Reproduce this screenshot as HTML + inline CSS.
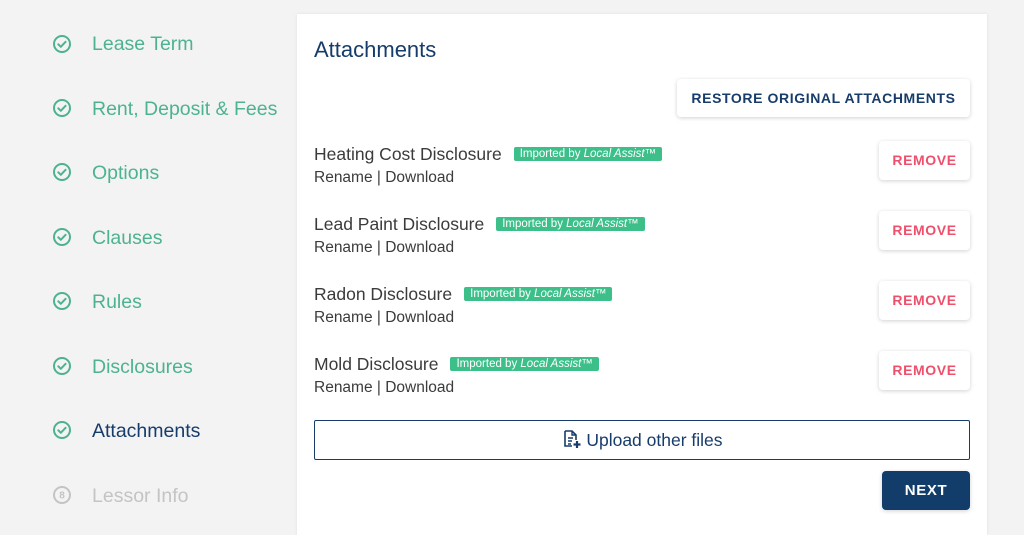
<!DOCTYPE html>
<html><head><style>
html,body{margin:0;width:1024px;height:535px;overflow:hidden}
body{background:#f3f3f3;font-family:"Liberation Sans",sans-serif;position:relative}
.nav{position:absolute;left:92px;font-size:19.5px;color:#4db38f}
.ic{position:absolute;left:52px;width:20px;height:20px}
.card{position:absolute;left:297px;top:14px;width:690px;height:521px;background:#fff;box-shadow:0 0 3px rgba(0,0,0,.08)}
.abs{position:absolute}
.btn{position:absolute;background:#fff;border-radius:4px;box-shadow:0 1px 4px rgba(0,0,0,.18);font-weight:bold;font-size:14px;letter-spacing:.6px;text-align:center}
.name{position:absolute;left:17px;font-size:17.5px;color:#3b3b3b}
.links{position:absolute;left:17px;font-size:15.5px;color:#3b3b3b}
.tag{display:inline-block;background:#3dbf8a;color:#fff;font-size:11.5px;padding:1px 6px;border-radius:2px;margin-left:12px;vertical-align:3px}
</style></head><body>
<svg width="0" height="0" style="position:absolute"><defs>
<g id="ck"><circle cx="10" cy="10" r="8" fill="none" stroke="#4db38f" stroke-width="2"/><path d="M6.3 10.3l2.5 2.5 4.8-5" fill="none" stroke="#4db38f" stroke-width="2" stroke-linecap="round" stroke-linejoin="round"/></g>
</defs></svg>
<svg class="ic" style="top:34px"><use href="#ck"/></svg><div class="nav" style="top:33px">Lease Term</div>
<svg class="ic" style="top:98px"><use href="#ck"/></svg><div class="nav" style="top:98px">Rent, Deposit &amp; Fees</div>
<svg class="ic" style="top:162px"><use href="#ck"/></svg><div class="nav" style="top:162px">Options</div>
<svg class="ic" style="top:227px"><use href="#ck"/></svg><div class="nav" style="top:227px">Clauses</div>
<svg class="ic" style="top:291px"><use href="#ck"/></svg><div class="nav" style="top:291px">Rules</div>
<svg class="ic" style="top:356px"><use href="#ck"/></svg><div class="nav" style="top:356px">Disclosures</div>
<svg class="ic" style="top:420px"><use href="#ck"/></svg><div class="nav" style="top:420px;color:#173c6b">Attachments</div>
<svg class="ic" style="top:485px"><circle cx="10" cy="10" r="8" fill="none" stroke="#c4c4c4" stroke-width="2"/><text x="10" y="13.5" font-size="10" font-weight="bold" text-anchor="middle" fill="#c4c4c4" font-family="Liberation Sans">8</text></svg><div class="nav" style="top:485px;color:#c4c4c4">Lessor Info</div>

<div class="card">
<div class="abs" style="left:17px;top:23px;font-size:22px;color:#173c6b">Attachments</div>
<div class="btn" style="left:380px;top:65px;width:293px;height:38px;line-height:38px;color:#173c6b">RESTORE ORIGINAL ATTACHMENTS</div>

<div class="name" style="top:130px">Heating Cost Disclosure<span class="tag">Imported by <i>Local Assist</i>™</span></div>
<div class="links" style="top:155px">Rename | Download</div>
<div class="btn" style="left:582px;top:127px;width:91px;height:39px;line-height:39px;color:#ef4f6b">REMOVE</div>

<div class="name" style="top:200px">Lead Paint Disclosure<span class="tag">Imported by <i>Local Assist</i>™</span></div>
<div class="links" style="top:225px">Rename | Download</div>
<div class="btn" style="left:582px;top:197px;width:91px;height:39px;line-height:39px;color:#ef4f6b">REMOVE</div>

<div class="name" style="top:270px">Radon Disclosure<span class="tag">Imported by <i>Local Assist</i>™</span></div>
<div class="links" style="top:295px">Rename | Download</div>
<div class="btn" style="left:582px;top:267px;width:91px;height:39px;line-height:39px;color:#ef4f6b">REMOVE</div>

<div class="name" style="top:340px">Mold Disclosure<span class="tag">Imported by <i>Local Assist</i>™</span></div>
<div class="links" style="top:365px">Rename | Download</div>
<div class="btn" style="left:582px;top:337px;width:91px;height:39px;line-height:39px;color:#ef4f6b">REMOVE</div>

<div class="abs" style="left:17px;top:406px;width:654px;height:38px;border:1px solid #173c6b;border-radius:2px;text-align:center;line-height:38px;font-size:17.5px;color:#173c6b">
<svg width="20" height="20" viewBox="0 0 20 20" style="vertical-align:-3px"><path d="M4 2h7l4 4v5M4 2v15h7" fill="none" stroke="#173c6b" stroke-width="1.6"/><path d="M11 2v4h4M7 9h5M7 12h4M7 15h3" fill="none" stroke="#173c6b" stroke-width="1.4"/><path d="M16 12v7M12.5 15.5h7" stroke="#173c6b" stroke-width="2.2"/></svg> Upload other files</div>
<div class="btn" style="left:585px;top:457px;width:88px;height:39px;line-height:39px;background:#123d6b;color:#fff;font-size:15px">NEXT</div>
</div>
</body></html>
